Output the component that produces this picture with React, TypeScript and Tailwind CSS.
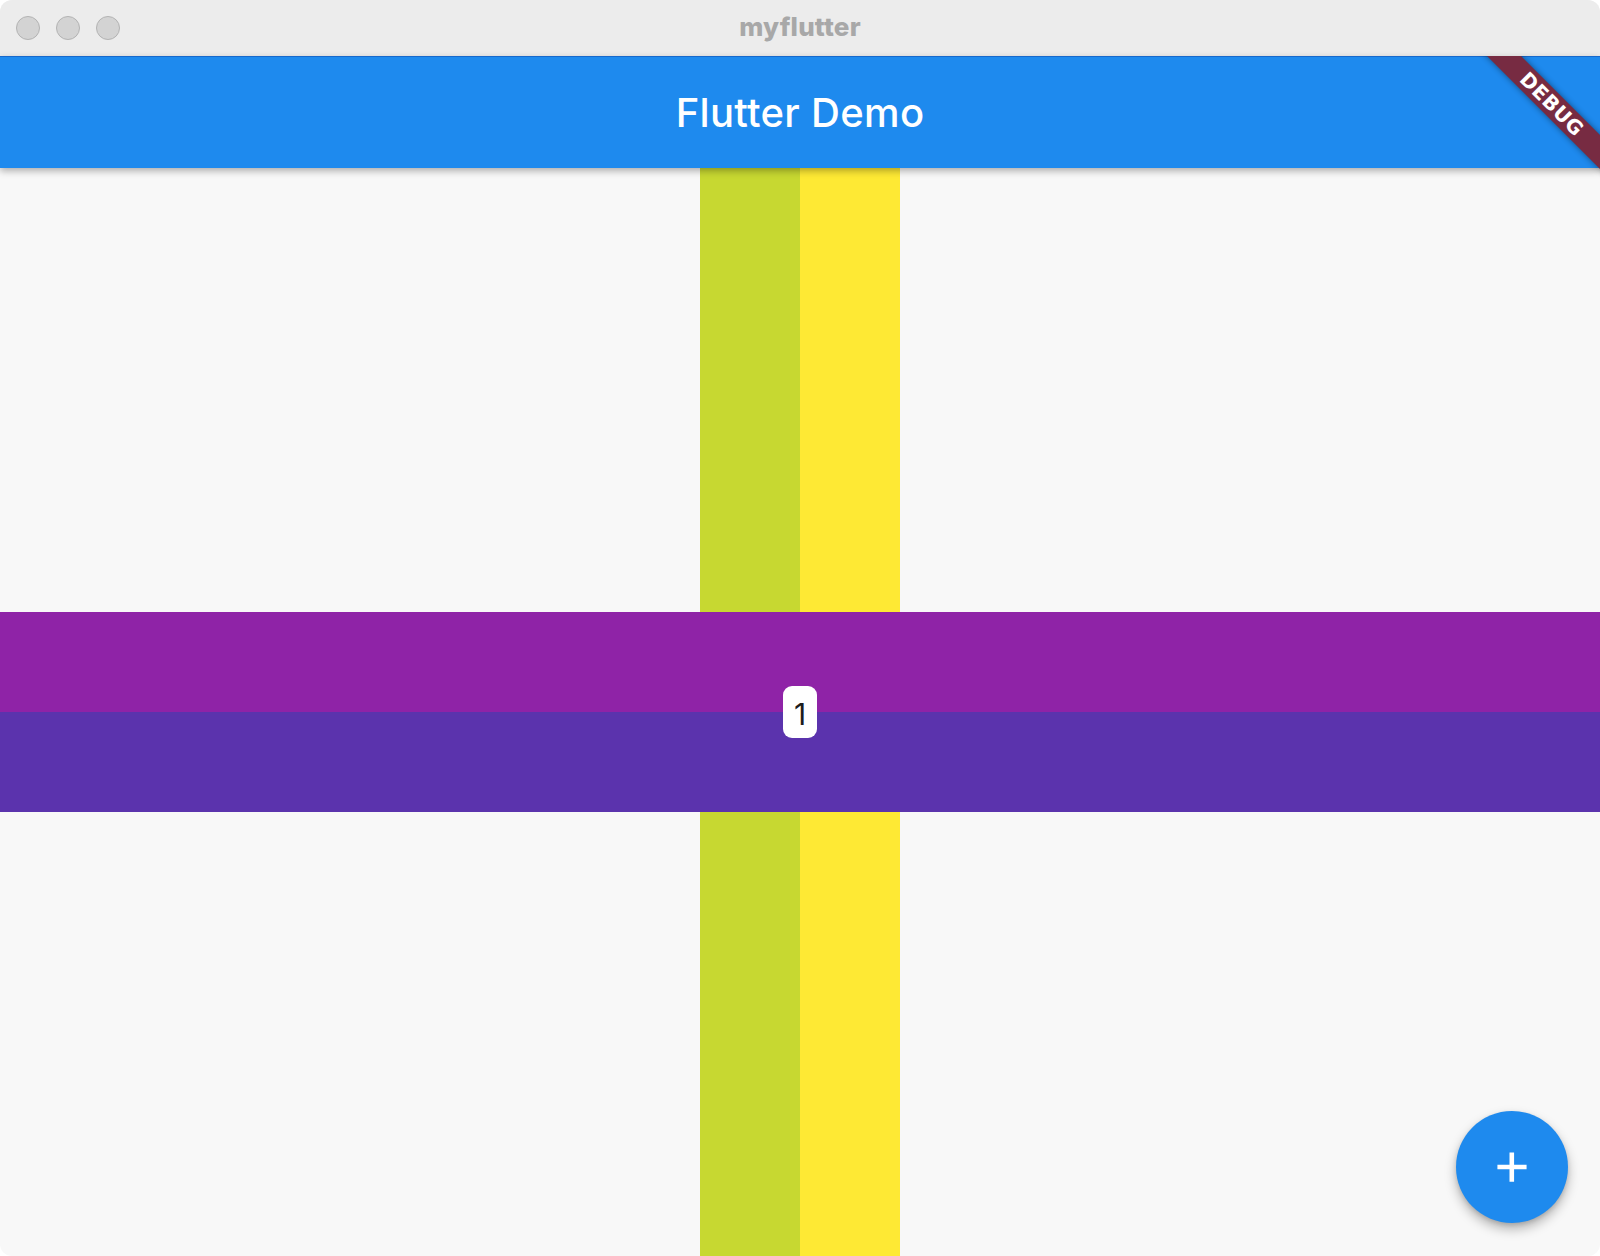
import type { ReactNode } from "react";

const sans = "font-['Inter','Noto_Sans',sans-serif]";

function TrafficLight() {
  return <span className="h-[24px] w-[24px] rounded-full border border-[#b3b3b3] bg-[#d3d3d3]" />;
}

function Stacked({ children }: { children: ReactNode }) {
  return <div className="col-start-1 row-start-1 flex h-full w-full items-center justify-center">{children}</div>;
}

export default function App() {
  return (
    <div className={`h-[1256px] w-[1600px] bg-white ${sans}`}>
      <div className="relative flex h-full flex-col overflow-hidden rounded-[12px] bg-[#f8f8f8]">
        {/* title bar */}
        <div className="relative flex h-[56px] shrink-0 items-center bg-[#ececec]">
          <div className="flex gap-[16px] pl-[16px]">
            <TrafficLight />
            <TrafficLight />
            <TrafficLight />
          </div>
          <div className="absolute inset-0 flex items-center justify-center pb-[3px] text-[26px] font-extrabold tracking-[0.2px] text-[#a8a8a8]">
            myflutter
          </div>
        </div>

        {/* app bar */}
        <header className="relative z-10 flex h-[112px] shrink-0 items-center justify-center border-t border-[#1769cc] bg-[#1e8aee] shadow-[0_3px_7px_rgba(0,0,0,0.3)]">
          <h1 className="text-[40px] font-medium tracking-[0.3px] text-white">Flutter Demo</h1>
        </header>

        {/* body */}
        <main className="relative grid flex-1 grid-cols-1 grid-rows-1">
          <Stacked>
            <div className="h-full w-[100px] bg-[#c7d831]" />
            <div className="h-full w-[100px] bg-[#fee934]" />
          </Stacked>
          <Stacked>
            <div className="flex w-full flex-col">
              <div className="h-[100px] w-full bg-[#8f23a7]" />
              <div className="h-[100px] w-full bg-[#5b33ad]" />
            </div>
          </Stacked>
          <Stacked>
            <div className="flex h-[52px] w-[34px] items-center justify-center rounded-[9px] bg-white pt-[4px] text-[30px] leading-none text-[#1d1d1d]">
              1
            </div>
          </Stacked>

          <button className="absolute bottom-[33px] right-[32px] flex h-[112px] w-[112px] items-center justify-center rounded-full bg-[#1e8aee] shadow-[0_6px_12px_rgba(0,0,0,0.28),0_2px_4px_rgba(0,0,0,0.12)]">
            <svg width="50" height="50" viewBox="0 0 24 24" fill="white">
              <path d="M19 13.1h-6v6h-2.2v-6H5v-2.2h5.8V5h2.2v5.9h6v2.2z" />
            </svg>
          </button>
        </main>

        {/* debug banner */}
        <div className="pointer-events-none absolute right-0 top-[56px] z-20 h-[200px] w-[200px] overflow-hidden">
          <div className="absolute left-[52px] top-[36px] flex h-[24px] w-[200px] rotate-45 items-center justify-center bg-[#772b42] shadow-[0_0_6px_rgba(0,0,0,0.45)]">
            <span className="font-['DejaVu_Sans',sans-serif] text-[20px] font-bold leading-none tracking-[0.5px] text-white">DEBUG</span>
          </div>
        </div>
      </div>
    </div>
  );
}
